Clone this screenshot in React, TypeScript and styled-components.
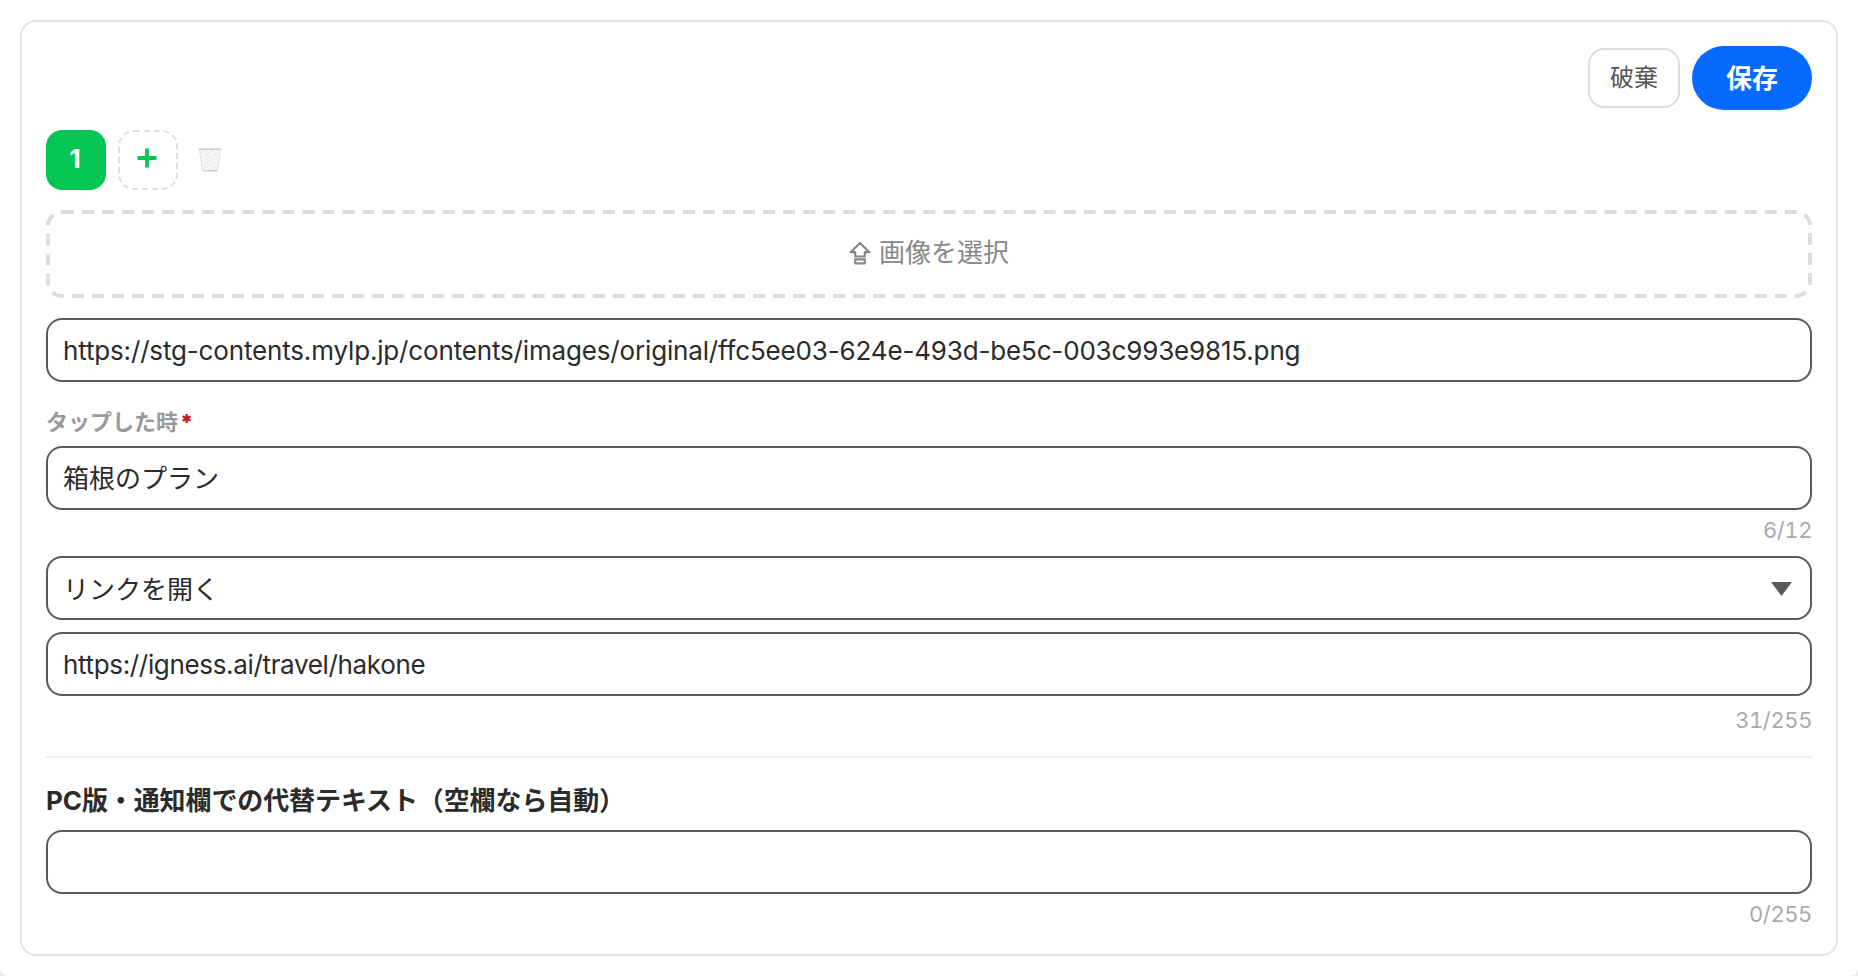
import * as React from "react";
import styled, { createGlobalStyle, css } from "styled-components";

const GlobalStyle = createGlobalStyle`
  *,
  *::before {
    box-sizing: border-box;
  }

  body {
    margin: 0;
    background: #ebebeb;
    overflow: hidden;
  }

  body,
  button,
  input {
    font-family: Inter, "Noto Sans CJK JP", sans-serif;
  }
`;

const Page = styled.div`
  height: 976px;
  padding: 20px;
  border-radius: 0 0 8px 8px;
  background: #fff;
`;

const Card = styled.section`
  display: flex;
  flex-direction: column;
  height: 936px;
  padding: 24px 24px 20px;
  border: 2px solid #e4e4e4;
  border-radius: 16px;
  background: #fff;

  > * {
    flex-shrink: 0;
  }
`;

const Actions = styled.div`
  display: flex;
  align-items: center;
  justify-content: flex-end;
  gap: 12px;
`;

const DiscardButton = styled.button`
  width: 92px;
  height: 60px;
  padding: 0 0 5px;
  border: 2px solid #ddd;
  border-radius: 16px;
  background: #fff;
  color: #555;
  font-size: 24px;
`;

const SaveButton = styled.button`
  width: 120px;
  height: 64px;
  padding: 0 0 4px;
  border: 0;
  border-radius: 32px;
  background: #066aff;
  color: #fff;
  font-size: 26px;
  font-weight: 700;
`;

const Tabs = styled.div`
  display: flex;
  align-items: center;
  gap: 12px;
  margin-top: 20px;
`;

// Border is drawn at half size and scaled up to get longer dashes
const dashedBorder = css<{ $dash: number }>`
  position: relative;

  &::before {
    content: "";
    position: absolute;
    top: 0;
    left: 0;
    width: 50%;
    height: 50%;
    border: ${({ $dash }) => $dash}px dashed #ddd;
    border-radius: 8px;
    transform: scale(2);
    transform-origin: 0 0;
    pointer-events: none;
  }
`;

const Tab = styled.button`
  width: 60px;
  height: 60px;
  padding: 0 2px 3px 0;
  border: 0;
  border-radius: 16px;
  background: #06c755;
  color: #fff;
  font-size: 26px;
  font-weight: 700;
`;

const AddTab = styled.button`
  ${dashedBorder}
  display: flex;
  align-items: center;
  justify-content: center;
  width: 60px;
  height: 60px;
  padding: 0 2px 4px 0;
  border: 0;
  background: none;
`;

const DeleteButton = styled.button`
  display: flex;
  margin-left: 8px;
  padding: 0;
  border: 0;
  background: none;
`;

const Upload = styled.button`
  ${dashedBorder}
  display: flex;
  align-items: center;
  justify-content: center;
  gap: 8px;
  height: 88px;
  margin-top: 20px;
  padding: 0 0 7px;
  border: 0;
  background: none;
  color: #888;
  font-size: 26px;

  svg {
    margin-top: 5px;
  }
`;

const field = css`
  display: block;
  width: 100%;
  height: 64px;
  padding: 1px 16px 0 15px;
  border: 2px solid #5a5a5a;
  border-radius: 16px;
  background: #fff;
  color: #2b2b2b;
  font-size: 26px;
  outline: none;
`;

const Input = styled.input<{ $top: number; $spacing?: string; $lift?: number }>`
  ${field}
  margin-top: ${({ $top }) => $top}px;
  padding-bottom: ${({ $lift = 0 }) => $lift}px;
  letter-spacing: ${({ $spacing = "0" }) => $spacing};
`;

const Select = styled.div<{ $top: number }>`
  ${field}
  display: flex;
  align-items: center;
  justify-content: space-between;
  margin-top: ${({ $top }) => $top}px;
  padding-right: 18px;

  span {
    padding-bottom: 3px;
  }
`;

const Label = styled.label`
  height: 32px;
  margin-top: 24px;
  color: #999;
  font-size: 22px;
  font-weight: 700;
  line-height: 32px;
`;

const Required = styled.span`
  margin-left: 2px;
  color: #c01828;
  font-weight: 900;
`;

const Counter = styled.div<{ $top: number }>`
  height: 36px;
  margin-top: ${({ $top }) => $top}px;
  color: #aaa;
  font-size: 22px;
  font-variant-numeric: tabular-nums;
  letter-spacing: -0.4px;
  line-height: 36px;
  text-align: right;
`;

const Divider = styled.hr`
  width: 100%;
  height: 2px;
  margin: 18px 0 0;
  border: 0;
  background: #eee;
`;

const Heading = styled.h2`
  height: 40px;
  margin: 23px 0 0;
  color: #2b2b2b;
  font-size: 26px;
  font-weight: 700;
  letter-spacing: -0.1px;
  line-height: 40px;
`;

const PlusIcon = () => (
  <svg width="20" height="20" viewBox="0 0 20 20">
    <path d="M10 0.5v19M0.5 10h19" stroke="#06c755" strokeWidth="3.8" />
  </svg>
);

const TrashIcon = () => (
  <svg width="24" height="26" viewBox="0 0 24 26" fill="none">
    <path d="M1.5 2.5h21l-2.8 21H4.3z" fill="#f7f7f7" stroke="#e2e2e2" />
    <path
      d="M2 6l4-3 4 4 4-4 4 4 4-3M3 11l4-4 5 4 5-4 4 4M3 15l4-4 5 4 5-4 4 4M4 19l4-4 4 4 4-4 4 4M5 23l3-4 4 4 4-4 3 4"
      stroke="#e4e4e4"
      strokeWidth="0.8"
    />
    <path d="M.5 2.2h23M5 23.8h14" stroke="#c8c8c8" strokeWidth="1.3" />
  </svg>
);

const UploadIcon = () => (
  <svg width="22" height="24" viewBox="0 0 22 24" fill="none">
    <path
      d="M11 2L1.6 11.2h4.6v4.3h9.6v-4.3h4.6zM6.2 18.3h9.6v4H6.2z"
      stroke="currentColor"
      strokeWidth="2.2"
      strokeLinejoin="round"
    />
  </svg>
);

const CaretIcon = () => (
  <svg width="21" height="14" viewBox="0 0 21 14">
    <path d="M0 0h21L10.5 14z" fill="#5a5a5a" />
  </svg>
);

const App = () => {
  return (
    <Page>
      <GlobalStyle />
      <Card>
        <Actions>
          <DiscardButton>破棄</DiscardButton>
          <SaveButton>保存</SaveButton>
        </Actions>

        <Tabs>
          <Tab>1</Tab>
          <AddTab $dash={1} aria-label="追加">
            <PlusIcon />
          </AddTab>
          <DeleteButton aria-label="削除">
            <TrashIcon />
          </DeleteButton>
        </Tabs>

        <Upload $dash={2}>
          <UploadIcon />
          画像を選択
        </Upload>
        <Input
          $top={20}
          $spacing="-0.16px"
          defaultValue="https://stg-contents.mylp.jp/contents/images/original/ffc5ee03-624e-493d-be5c-003c993e9815.png"
        />

        <Label>
          タップした時<Required>*</Required>
        </Label>
        <Input $top={8} $lift={4} defaultValue="箱根のプラン" />
        <Counter $top={2}>6/12</Counter>
        <Select $top={8}>
          <span>リンクを開く</span>
          <CaretIcon />
        </Select>
        <Input
          $top={12}
          $spacing="-0.34px"
          defaultValue="https://igness.ai/travel/hakone"
        />
        <Counter $top={6}>31/255</Counter>

        <Divider />
        <Heading>PC版・通知欄での代替テキスト（空欄なら自動）</Heading>
        <Input $top={9} />
        <Counter $top={2}>0/255</Counter>
      </Card>
    </Page>
  );
};

export default App;
